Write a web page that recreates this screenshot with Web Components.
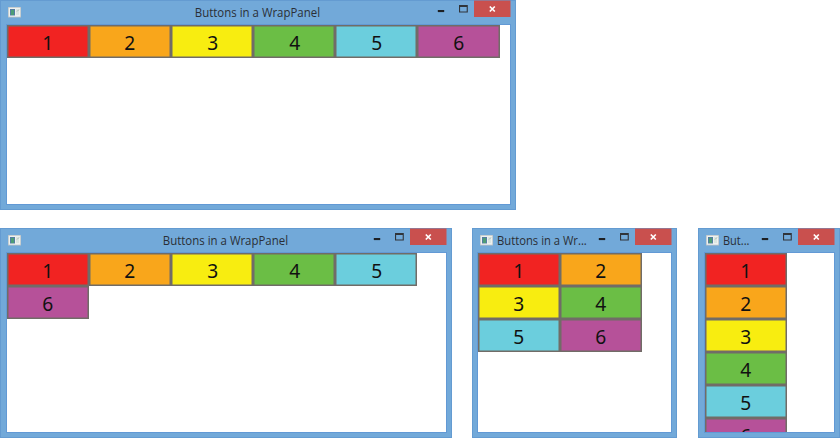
<!DOCTYPE html>
<html lang="en"><head><meta charset="utf-8"><title>Buttons in a WrapPanel</title>
<style>
html,body{margin:0;background:#fff}
body{width:840px;height:438px;overflow:hidden;font-family:"Open Sans","Noto Sans",sans-serif;color:#111}
</style></head><body>
<demo-stage></demo-stage>
<script>
class ColorButton extends HTMLElement{
  constructor(){super();this.attachShadow({mode:'open'}).innerHTML=`<style>
  :host{box-sizing:border-box;display:block;flex:none;width:82.1px;height:33px;border:1px solid #716c67;background:var(--fill);box-shadow:inset 0 0 0 .5px #716c67;text-align:center;font:20px/33px "Noto Sans",sans-serif;color:#111}
  span{display:inline-block;transform:scaleX(.96)}
  </style><span><slot></slot></span>`;}
}
customElements.define('color-button',ColorButton);

class WrapPanel extends HTMLElement{
  constructor(){super();this.attachShadow({mode:'open'}).innerHTML=`<style>
  :host{box-sizing:border-box;display:flex;flex-wrap:wrap;align-content:flex-start;height:100%;overflow:hidden}
  </style><slot></slot>`;}
}
customElements.define('wrap-panel',WrapPanel);

class AppWindow extends HTMLElement{
  constructor(){super();this.attachShadow({mode:'open'}).innerHTML=`<style>
  :host{box-sizing:border-box;display:flex;flex-direction:column;height:210px;padding:0 6px 6px;background:#72a9d9;box-shadow:inset 0 0 0 1px #649bd1}
  header{display:flex;flex:none;height:25px;align-items:flex-start}
  .icon{display:block;flex:none;margin:7px 0 0 2px}
  .title{flex:1;min-width:0;height:25px;font-size:12.5px;line-height:25px;color:#2a2f36;white-space:nowrap;text-align:var(--align,center);padding-left:var(--lead,57px)}
  .title span{display:inline-block;transform:scaleX(var(--sx,.915));transform-origin:var(--origin,center)}
  .controls{display:block;flex:none;margin-right:-1px}
  main{flex:1;min-height:0;margin-left:var(--edge,1px);background:#fff;box-shadow:0 0 0 1px #6299d5}
  </style><header>
  <svg class="icon" width="13" height="11" viewBox="0 0 13 11"><path fill="#b8c0c5" d="M0 0h13v10.5H0z"/><path fill="#eef1ef" d="M.7.7h11.6v9H.7z"/><path fill="#547ca3" d="M2 2h5v6.5H2z"/><path fill="#4d9d75" d="M3 3h3v5H3z"/><path fill="#dbe6e1" d="M8 2h3v6H8z"/><path d="M9 4.5l2-2" stroke="#a9bbb1" fill="none"/></svg>
  <div class="title"><span><slot name="title"></slot></span></div>
  <svg class="controls" width="74" height="17" viewBox="0 0 74 17"><path fill="#c9504e" d="M37 0.5h36.5V17H37z"/><path fill="#1d2024" d="M.8 10h6.4v2.1H.8z"/><path fill="#30343a" fill-rule="evenodd" d="M22 5h8.8v7.6H22zM23.1 7h6.6v4.5h-6.6z"/><path d="M52.8 6.5l5 5m0-5l-5 5" stroke="#fff" stroke-width="1.7"/></svg>
  </header><main><slot></slot></main>`;}
}
customElements.define('app-window',AppWindow);

class DemoStage extends HTMLElement{
  constructor(){
    super();
    const colors=['#f12322','#f9a61b','#f8ed10','#6bbe45','#6bcedd','#b65199'];
    const win=(id,title)=>`<app-window id="${id}"><span slot="title">${title}</span><wrap-panel>${colors.map((c,i)=>`<color-button style="--fill:${c}">${i+1}</color-button>`).join('')}</wrap-panel></app-window>`;
    this.attachShadow({mode:'open'}).innerHTML=`<style>
    :host{display:grid;gap:18px;width:840px}
    .row{display:flex}
    #a{width:516px}#b{width:452px}
    #c{width:205px;margin-left:20px;--align:left;--origin:left;--lead:4px;--sx:.9;--edge:0px}
    #d{width:142px;margin-left:21px;--align:left;--origin:left;--lead:4px;--sx:.88}
    </style><div class="row">${win('a','Buttons in a WrapPanel')}</div>
    <div class="row">${win('b','Buttons in a WrapPanel')}${win('c','Buttons in a Wr...')}${win('d','But...')}</div>`;
  }
}
customElements.define('demo-stage',DemoStage);
</script></body></html>
